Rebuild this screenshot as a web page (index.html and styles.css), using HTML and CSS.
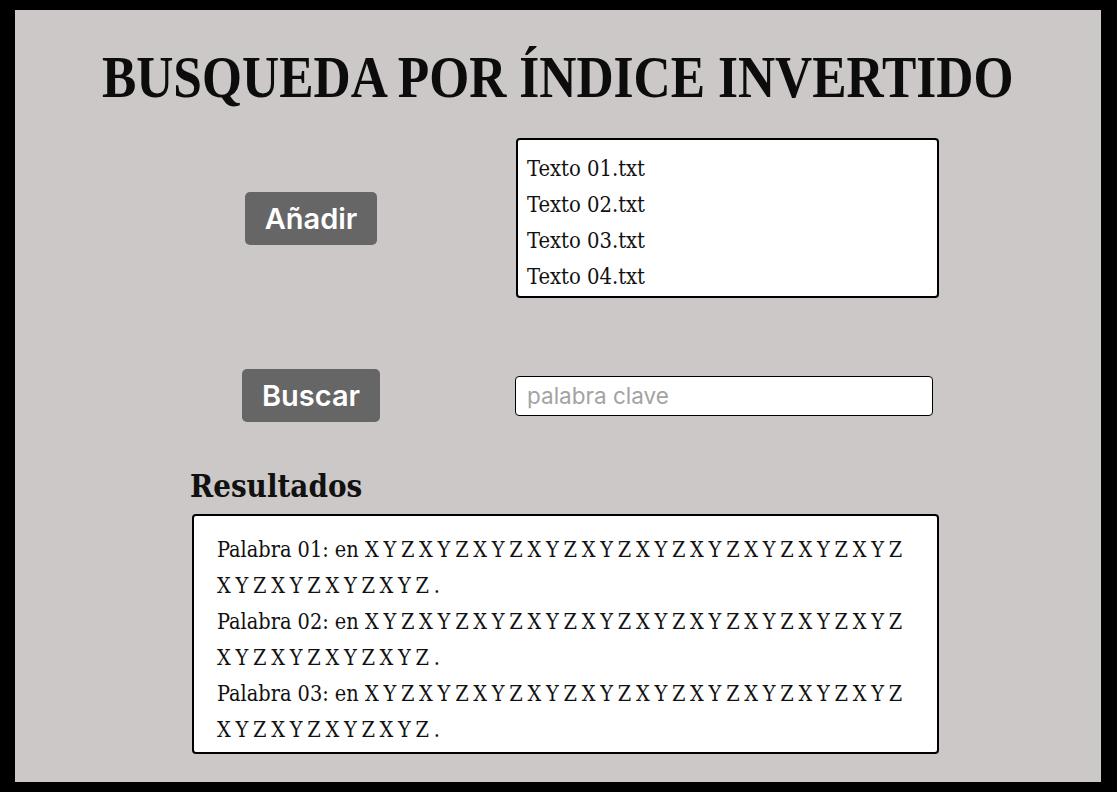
FILE: index.html
```html
<!DOCTYPE html>
<html lang="es">
<head>
<meta charset="utf-8">
<title>Busqueda por índice invertido</title>
<link rel="stylesheet" href="styles.css">
</head>
<body>
<main class="panel">
  <h1 class="title"><span class="title-text">BUSQUEDA POR ÍNDICE INVERTIDO</span></h1>

  <section class="row row-files">
    <div class="cell-btn"><button class="btn">Añadir</button></div>
    <ul class="file-list">
      <li>Texto 01.txt</li>
      <li>Texto 02.txt</li>
      <li>Texto 03.txt</li>
      <li>Texto 04.txt</li>
    </ul>
  </section>

  <section class="row row-search">
    <div class="cell-btn"><button class="btn">Buscar</button></div>
    <input class="search" type="text" placeholder="palabra clave">
  </section>

  <section class="results">
    <h2 class="results-title">Resultados</h2>
    <div class="results-box">
      <p>Palabra 01: en <span class="xyz">X Y Z X Y Z X Y Z X Y Z X Y Z X Y Z X Y Z X Y Z X Y Z X Y Z</span><br><span class="xyz">X Y Z X Y Z X Y Z X Y Z .</span></p>
      <p>Palabra 02: en <span class="xyz">X Y Z X Y Z X Y Z X Y Z X Y Z X Y Z X Y Z X Y Z X Y Z X Y Z</span><br><span class="xyz">X Y Z X Y Z X Y Z X Y Z .</span></p>
      <p>Palabra 03: en <span class="xyz">X Y Z X Y Z X Y Z X Y Z X Y Z X Y Z X Y Z X Y Z X Y Z X Y Z</span><br><span class="xyz">X Y Z X Y Z X Y Z X Y Z .</span></p>
    </div>
  </section>
</main>
</body>
</html>
```

FILE: styles.css
```css
* { box-sizing: border-box; }

html, body {
  margin: 0;
  background: #000;
}

body {
  padding: 10px 16px 10px 15px;
  font-family: "DejaVu Serif Condensed", "DejaVu Serif", serif;
  font-stretch: condensed;
  color: #111;
}

.panel {
  background: #cbc8c7;
  height: 772px;
  padding-top: 32px;
}

.title {
  margin: 0;
  text-align: center;
  font-family: "Liberation Serif", serif;
  font-stretch: normal;
  font-weight: 700;
  font-size: 59px;
  line-height: 70px;
  color: #0c0c0c;
}

.title-text {
  display: inline-block;
  transform: scaleX(0.872);
  transform-origin: center;
  white-space: nowrap;
  margin-left: 0;
}

.row {
  display: grid;
  grid-template-columns: 400px 423px;
  column-gap: 5px;
  align-items: center;
  padding-left: 96px;
}

.row-files { margin-top: 26px; }
.row-search { margin-top: 71px; }

.cell-btn {
  display: flex;
  justify-content: center;
}

.btn {
  font-family: Inter, "Noto Sans", sans-serif;
  font-stretch: normal;
  font-weight: 600;
  font-size: 29px;
  color: #fff;
  background: #666666;
  border: none;
  border-radius: 5px;
  height: 53px;
  padding: 0 19.5px;
}

.file-list {
  list-style: none;
  margin: 0;
  height: 160px;
  padding: 11px 10px 0 9px;
  background: #fff;
  border: 2px solid #000;
  border-radius: 4px;
  font-size: 21.8px;
  line-height: 36px;
}

.search {
  width: 418px;
  height: 40px;
  margin-left: -1px;
  border: 1.5px solid #000;
  border-radius: 4px;
  background: #fff;
  padding: 0 11px;
  font-family: Inter, "Noto Sans", sans-serif;
  font-stretch: normal;
  font-size: 22.5px;
  color: #222;
}

.search::placeholder { color: #a3a3a3; }

.results {
  padding-left: 175px;
  margin-top: 44px;
}

.results-title {
  margin: 0;
  font-size: 31px;
  font-weight: 700;
  line-height: 40px;
  color: #111;
}

.results-box {
  margin-top: 8px;
  margin-left: 2px;
  width: 747px;
  height: 240px;
  background: #fff;
  border: 2px solid #000;
  border-radius: 4px;
  padding: 16px 10px 0 23px;
  font-size: 21.5px;
  line-height: 36px;
}

.results-box p { margin: 0; white-space: nowrap; }

.xyz { letter-spacing: -0.7px; }
```
